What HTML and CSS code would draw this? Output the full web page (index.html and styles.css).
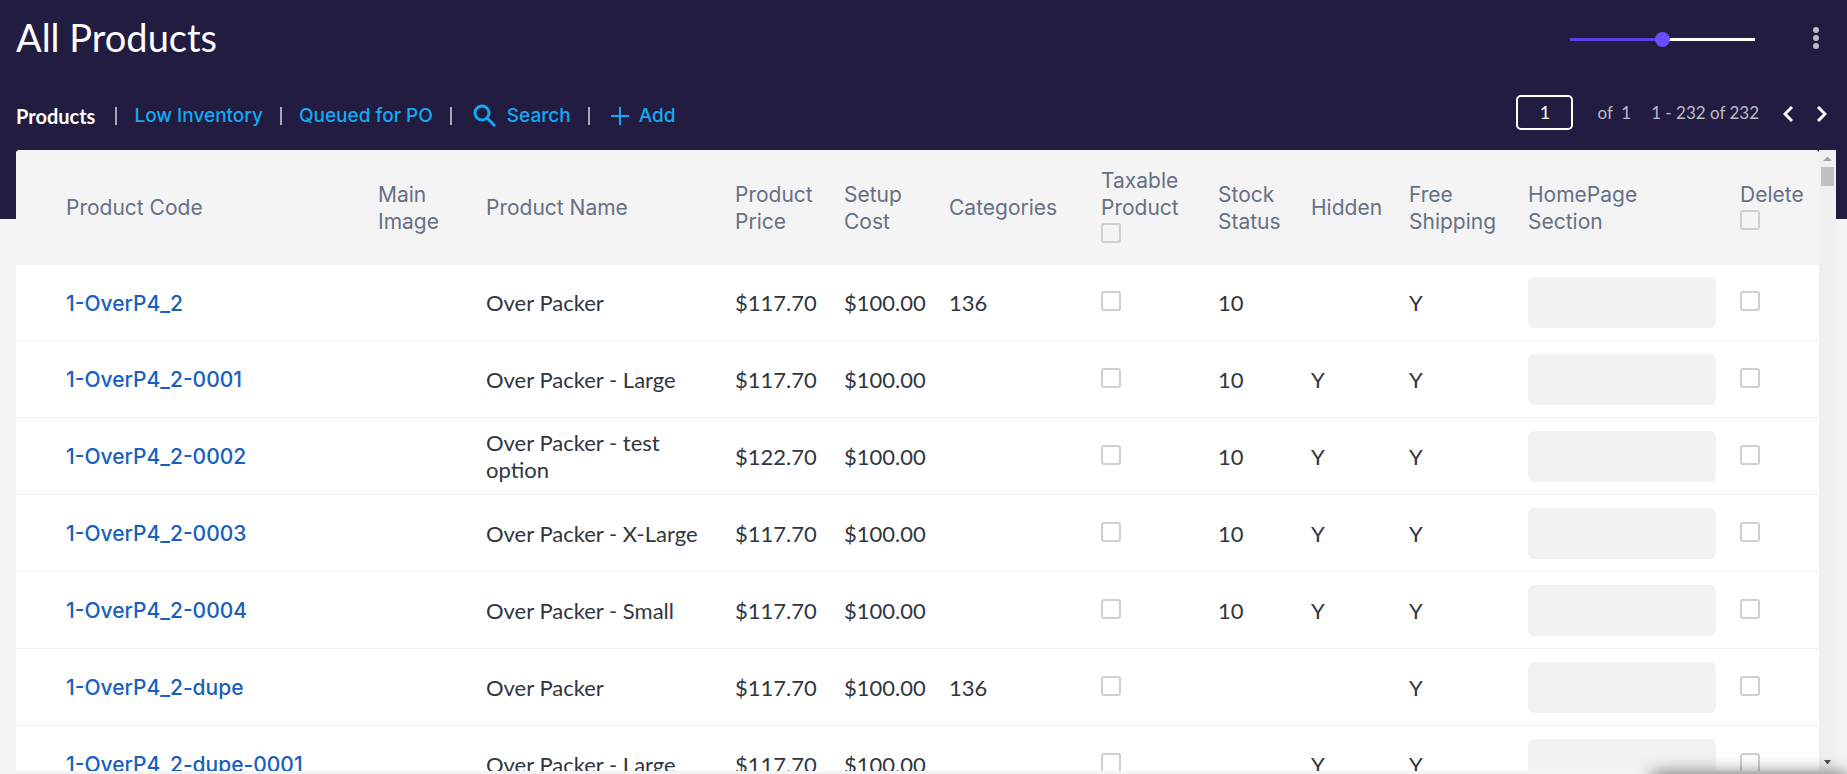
FILE: index.html
```html
<!DOCTYPE html>
<html lang="en">
<head>
  <meta charset="UTF-8">
  <meta name="viewport" content="width=device-width, initial-scale=1.0">
  <title>All Products</title>
  <link rel="stylesheet" href="styles.css">
</head>
<body>
  <header class="topbar">
    <div class="title-row">
      <h1>All Products</h1>
      <input type="range" class="zoom-slider" min="0" max="100" value="50" aria-label="Row size">
      <button type="button" class="icon-btn menu-btn" aria-label="More options">
        <svg width="6" height="22" viewBox="0 0 6 22" fill="#bdbcc6"><circle cx="3" cy="3" r="3"/><circle cx="3" cy="11" r="3"/><circle cx="3" cy="19" r="3"/></svg>
      </button>
    </div>
    <div class="nav-row">
      <nav class="tabs">
        <span class="current">Products</span>
        <a href="#">Low Inventory</a>
        <a href="#">Queued for PO</a>
        <a href="#">
          <svg width="24" height="24" viewBox="0 0 24 24" fill="none" stroke="currentColor"><circle cx="9" cy="9" r="7" stroke-width="3"/><path d="M14 14l8 8" stroke-width="3"/></svg>
          Search
        </a>
        <a href="#">
          <svg width="18" height="18" viewBox="0 0 18 18" fill="none" stroke="currentColor" stroke-width="2"><path d="M9 0v18M0 9h18"/></svg>
          Add
        </a>
      </nav>
      <div class="pager">
        <input type="text" class="page-input" value="1" aria-label="Page">
        <span class="pages">of&nbsp; 1</span>
        <span class="range">1 - 232 of 232</span>
        <button type="button" class="icon-btn" aria-label="Previous page">
          <svg width="10" height="16" viewBox="0 0 10 16" fill="none" stroke="#fff" stroke-width="3"><path d="M9 1L2 8l7 7"/></svg>
        </button>
        <button type="button" class="icon-btn" aria-label="Next page">
          <svg width="10" height="16" viewBox="0 0 10 16" fill="none" stroke="#fff" stroke-width="3"><path d="M1 1l7 7-7 7"/></svg>
        </button>
      </div>
    </div>
  </header>

  <main class="grid-wrap">
    <div class="grid">
      <table>
        <colgroup>
          <col>
          <col class="c-image">
          <col class="c-name">
          <col class="c-price">
          <col class="c-setup">
          <col class="c-categories">
          <col class="c-taxable">
          <col class="c-stock">
          <col class="c-hidden">
          <col class="c-shipping">
          <col class="c-section">
          <col class="c-delete">
        </colgroup>
        <thead>
          <tr>
            <th>Product Code</th>
            <th>Main<br>Image</th>
            <th>Product Name</th>
            <th>Product<br>Price</th>
            <th>Setup<br>Cost</th>
            <th>Categories</th>
            <th><label>Taxable<br>Product<input type="checkbox"></label></th>
            <th>Stock<br>Status</th>
            <th>Hidden</th>
            <th>Free<br>Shipping</th>
            <th>HomePage<br>Section</th>
            <th><label>Delete<input type="checkbox"></label></th>
          </tr>
        </thead>
        <tbody id="rows"></tbody>
      </table>
    </div>
    <div class="scrollbar">
      <svg width="17" height="17" viewBox="0 0 17 17" fill="#a3a3a3"><path d="M8 7h1l4 4H4z"/></svg>
      <div class="thumb"></div>
      <svg class="down" width="17" height="17" viewBox="0 0 17 17" fill="#505050"><path d="M5 6h7l-3 4H8z"/></svg>
    </div>
  </main>
  <div class="popup-edge"></div>

  <script>
    // code, name, price, setup, categories, stock, hidden, free shipping
    const products = [
      ['1-OverP4_2', 'Over Packer', '$117.70', '$100.00', '136', '10', '', 'Y'],
      ['1-OverP4_2-0001', 'Over Packer - Large', '$117.70', '$100.00', '', '10', 'Y', 'Y'],
      ['1-OverP4_2-0002', 'Over Packer - test option', '$122.70', '$100.00', '', '10', 'Y', 'Y'],
      ['1-OverP4_2-0003', 'Over Packer - X-Large', '$117.70', '$100.00', '', '10', 'Y', 'Y'],
      ['1-OverP4_2-0004', 'Over Packer - Small', '$117.70', '$100.00', '', '10', 'Y', 'Y'],
      ['1-OverP4_2-dupe', 'Over Packer', '$117.70', '$100.00', '136', '', '', 'Y'],
      ['1-OverP4_2-dupe-0001', 'Over Packer - Large', '$117.70', '$100.00', '', '', 'Y', 'Y']
    ];
    document.getElementById('rows').innerHTML = products.map(p => `
      <tr>
        <td><a href="#">${p[0]}</a></td>
        <td></td>
        <td>${p[1]}</td>
        <td>${p[2]}</td>
        <td>${p[3]}</td>
        <td>${p[4]}</td>
        <td><input type="checkbox" aria-label="Taxable ${p[0]}"></td>
        <td>${p[5]}</td>
        <td>${p[6]}</td>
        <td>${p[7]}</td>
        <td><input type="text" class="section-input" aria-label="HomePage section ${p[0]}"></td>
        <td><input type="checkbox" aria-label="Delete ${p[0]}"></td>
      </tr>`).join('');
  </script>
</body>
</html>
```

FILE: styles.css
```css
* { box-sizing: border-box; }
html, body { height: 100%; }
body { margin: 0; display: flex; flex-direction: column; overflow: hidden; font-family: Lato, "Liberation Sans", sans-serif; color: #2f3640; background: linear-gradient(#211c40 219px, #f4f4f4 219px); }
svg { display: block; flex: none; }
.topbar { flex: none; height: 150px; padding: 0 16px; }
.title-row { display: flex; align-items: center; height: 78px; }
h1 { margin: 0 auto 0 0; padding-bottom: 4px; color: #fff; font-size: 38px; font-weight: 400; line-height: 48px; }
.icon-btn { padding: 0; border: none; background: none; cursor: pointer; }
.menu-btn { margin: 0 12px 2px 58px; }

.zoom-slider { appearance: none; width: 185px; height: 16px; margin: 0; background: linear-gradient(to right, #5d3fe6 50%, #fff 50%) center / 100% 3px no-repeat; }
.zoom-slider::-webkit-slider-thumb { appearance: none; width: 15px; height: 15px; border-radius: 50%; background: #6a4dff; }

.nav-row { display: flex; align-items: center; justify-content: space-between; height: 72px; padding-bottom: 4px; }
.tabs { display: flex; align-items: center; padding-top: 8px; font-family: Inter, Lato, sans-serif; font-size: 19px; font-weight: 500; line-height: 24px; }
.tabs a { display: flex; align-items: center; gap: 10px; color: #14a9f5; text-decoration: none; }
.tabs > * + *::before { content: ""; width: 2px; height: 18px; margin: 0 7px 0 17px; background: #a9a7b5; }
.tabs a svg { margin-left: 4px; }
.current { margin-right: 3px; color: #fff; font-family: Lato, sans-serif; font-size: 20px; font-weight: 700; }

.pager { display: flex; align-items: center; color: #bdbcc6; font-size: 17px; }
.page-input { width: 57px; height: 35px; padding: 0; border: 2px solid #fff; border-radius: 5px; background: none; color: #fff; font: 18px Lato, sans-serif; text-align: center; }
.pages { margin: 0 20px 0 24px; }
.range { margin-right: 4px; }
.pager .icon-btn { margin: 3px 4px 0 20px; }

.grid-wrap { flex: 1; min-height: 0; display: flex; margin: 0 11px 3px 16px; }
.grid { flex: 1; overflow: hidden; border-radius: 4px 4px 0 0; background: #fff; }
table { width: 100%; table-layout: fixed; border-collapse: separate; border-spacing: 0; font-size: 22px; line-height: 27px; }
.c-image { width: 108px; }
.c-name { width: 249px; }
.c-price { width: 109px; }
.c-setup { width: 105px; }
.c-categories { width: 152px; }
.c-taxable { width: 117px; }
.c-stock { width: 93px; }
.c-hidden { width: 98px; }
.c-shipping { width: 119px; }
.c-section { width: 212px; }
.c-delete { width: 89px; }
th, td { padding: 0 0 0 10px; text-align: left; vertical-align: middle; }
th:first-child, td:first-child { padding-left: 50px; }
th { height: 115px; background: #f4f4f4; color: #667085; font-family: Inter, Lato, sans-serif; font-size: 21px; font-weight: 400; }
td { height: 77px; border-bottom: 1px solid #f2f2f3; }
tbody tr:first-child td { height: 76px; }
td:nth-child(3) { padding-right: 16px; }
td a { color: #1760bd; font-family: Inter, Lato, sans-serif; font-size: 21px; font-weight: 500; text-decoration: none; }
input[type=checkbox] { appearance: none; display: block; width: 20px; height: 20px; margin: 0 0 3px; border: 2px solid #cfced3; border-radius: 3px; }
th input[type=checkbox] { margin: 2px 0 5px; }
.section-input { display: block; width: 188px; height: 51px; border: none; border-radius: 6px; background: #f1f2f4; }

.scrollbar { flex: none; display: flex; flex-direction: column; width: 17px; background: #f0f0f0; }
.thumb { width: 13px; height: 19px; margin: 0 auto; background: #c1c1c1; }
.down { margin-top: auto; }
/* top edge of the popup docked under the window */
.popup-edge { position: fixed; right: 0; bottom: -20px; width: 195px; height: 20px; box-shadow: 0 0 18px rgba(0,0,0,0.6); }
```
